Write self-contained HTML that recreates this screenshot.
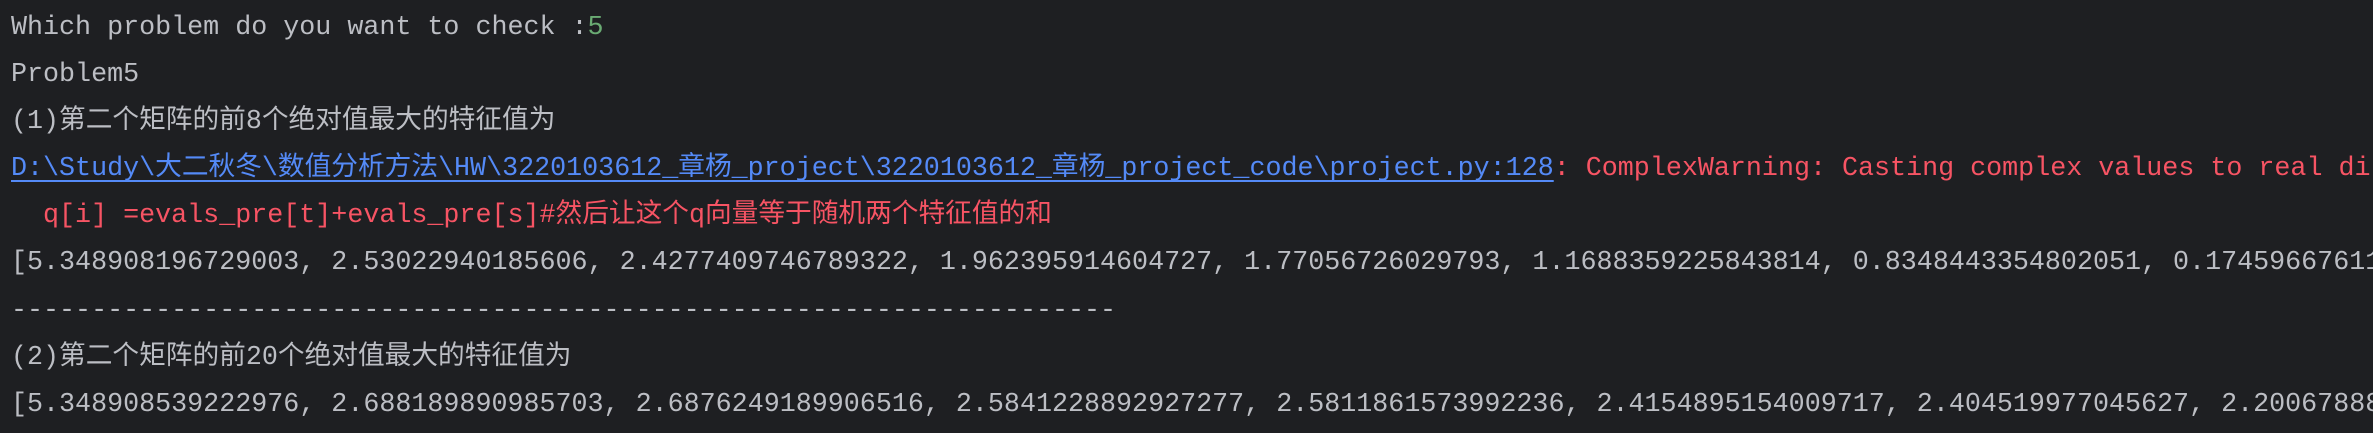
<!DOCTYPE html>
<html><head><meta charset="utf-8"><style>
html,body{margin:0;padding:0;background:#1e1f22;width:2373px;height:433px;overflow:hidden}
pre{margin:0;padding:5px 0 0 11px;width:2362px;height:428px;overflow:hidden;font-family:"Liberation Mono","Noto Sans CJK SC",monospace;font-size:26.7px;line-height:47.1px;color:#bcbec4;white-space:pre}
.g{color:#6aab73}.r{color:#f75464}.l{color:#548af7;text-decoration:underline;text-decoration-thickness:2px;text-underline-offset:5px}
</style></head><body><pre>Which problem do you want to check :<span class="g">5</span>
Problem5
(1)第二个矩阵的前8个绝对值最大的特征值为
<span class="l">D:\Study\大二秋冬\数值分析方法\HW\3220103612_章杨_project\3220103612_章杨_project_code\project.py:128</span><span class="r">: ComplexWarning: Casting complex values to real di</span>
<span class="r">  q[i] =evals_pre[t]+evals_pre[s]#然后让这个q向量等于随机两个特征值的和</span>
[5.348908196729003, 2.53022940185606, 2.4277409746789322, 1.962395914604727, 1.77056726029793, 1.1688359225843814, 0.8348443354802051, 0.17459667611
---------------------------------------------------------------------
(2)第二个矩阵的前20个绝对值最大的特征值为
[5.348908539222976, 2.688189890985703, 2.6876249189906516, 2.5841228892927277, 2.5811861573992236, 2.4154895154009717, 2.404519977045627, 2.20067888</pre></body></html>
